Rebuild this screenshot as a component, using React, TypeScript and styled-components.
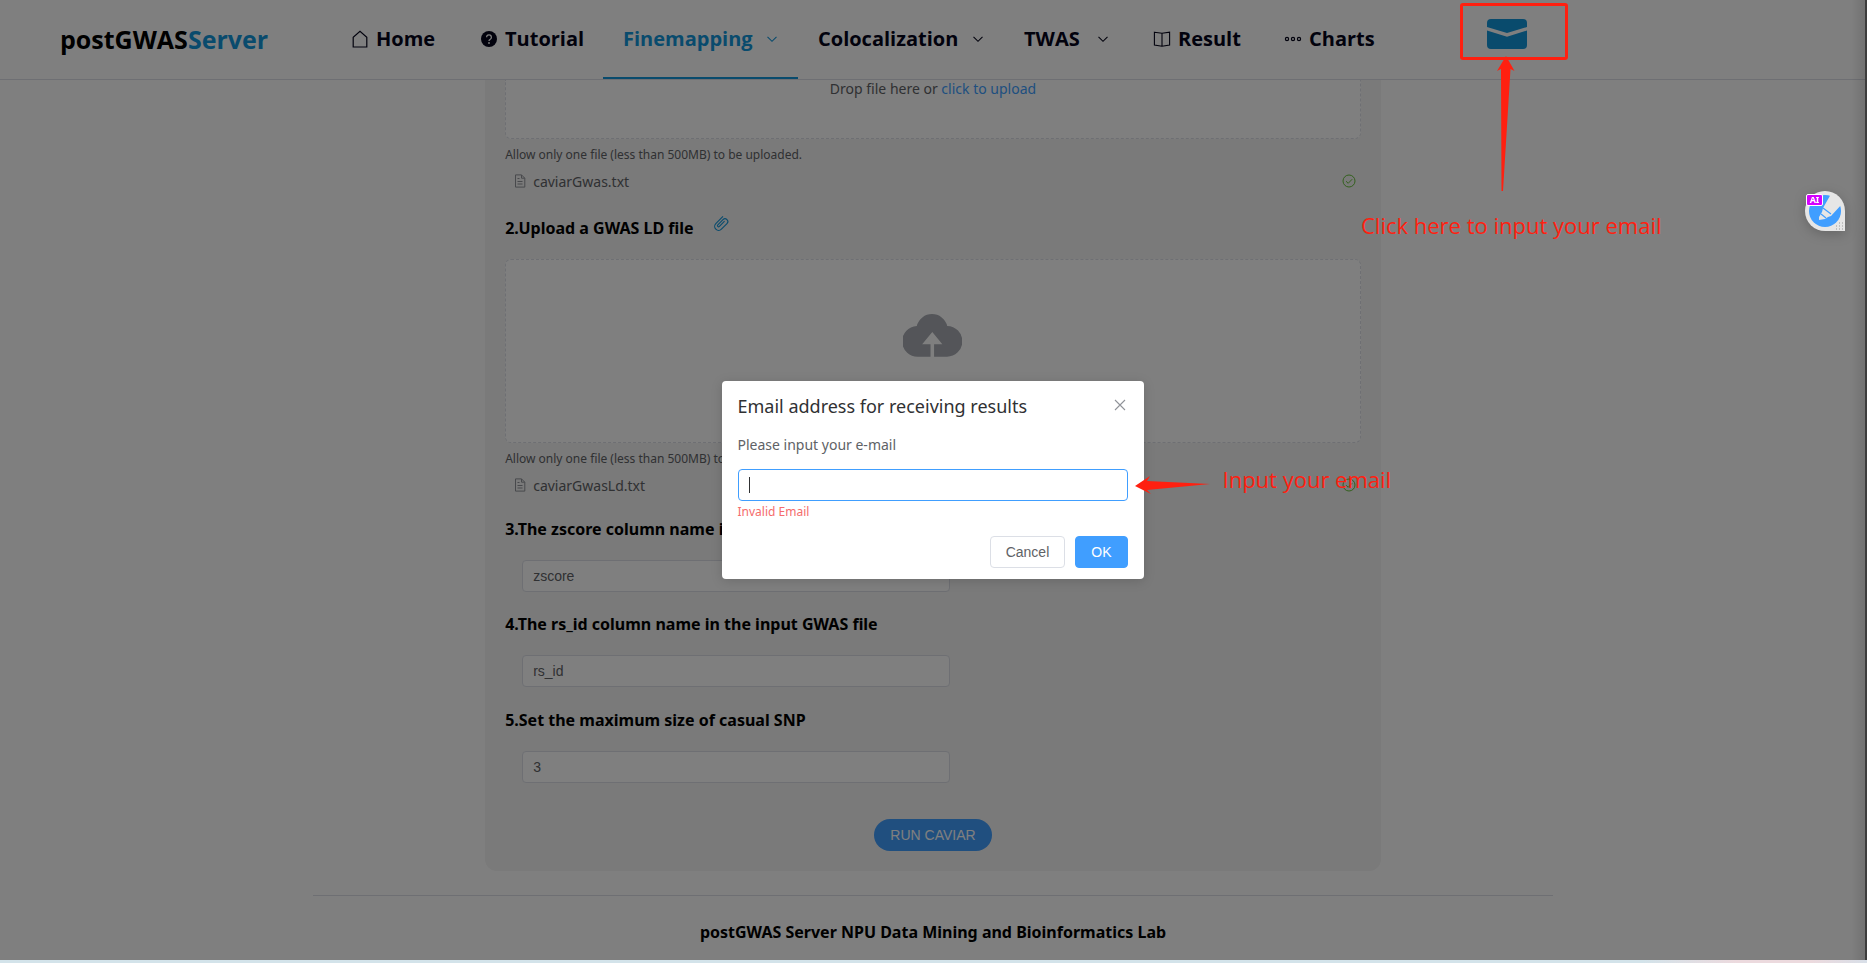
import React from "react";
import styled, { createGlobalStyle } from "styled-components";

const uiFont = `"Noto Sans", "Open Sans", sans-serif`;
const navFont = `"Open Sans", "Noto Sans", sans-serif`;
const controlFont = `"Liberation Sans", Arial, sans-serif`;
const brand = "#1296db";
const primary = "#409eff";
const red = "#ff2010";

const GlobalStyle = createGlobalStyle`
  *, *::before, *::after { box-sizing: border-box; }
  body { margin: 0; background: #fff; font-family: ${uiFont}; color: #000; }
  h1, h2, h3, p, ul { margin: 0; padding: 0; }
  button, input { font-family: ${controlFont}; font-size: 14px; }
`;

const Page = styled.div`
  position: relative;
  display: flex;
  flex-direction: column;
  min-height: 100vh;
  overflow: hidden;
`;

const Content = styled.div`
  padding-right: 1px;
`;

const Header = styled.header`
  display: flex;
  align-items: stretch;
  height: 80px;
  border-bottom: 1px solid #dcdfe6;
  font-family: ${navFont};
`;

const Logo = styled.a`
  display: flex;
  align-items: center;
  width: 327px;
  padding: 0 0 2px 60px;
  color: #000;
  font-size: 25px;
  font-weight: 700;
  text-decoration: none;
  span { color: ${brand}; }
`;

const Nav = styled.nav`
  display: flex;
`;

const NavItem = styled.a<{ $active?: boolean; $width: number }>`
  display: flex;
  align-items: center;
  width: ${(p) => p.$width}px;
  padding: 0 20px;
  border-bottom: 2px solid ${(p) => (p.$active ? brand : "transparent")};
  color: ${(p) => (p.$active ? brand : "#04041a")};
  font-size: 20px;
  font-weight: 700;
  white-space: nowrap;
  text-decoration: none;
`;

const NavIcon = styled.svg`
  flex: none;
  width: 18px;
  height: 18px;
  margin: 0 7px 0 4px;
`;

const NavArrow = styled.svg`
  flex: none;
  width: 12px;
  height: 12px;
  margin-left: auto;
`;

const MailSpot = styled.div`
  position: relative;
  width: 108px;
  height: 57px;
  margin: 3px 0 0 66px;
`;

const MailButton = styled.button`
  display: flex;
  align-items: center;
  justify-content: center;
  width: 94px;
  height: 62px;
  padding: 0;
  border: 0;
  background: none;
  svg { width: 40px; height: 30px; }
`;

const MailFrame = styled.div`
  position: absolute;
  inset: 0;
  z-index: 5;
  border: 3px solid ${red};
  border-radius: 3px;
  pointer-events: none;
`;

const MailArrow = styled.svg`
  position: absolute;
  z-index: 5;
  top: 53px;
  left: 36px;
  width: 20px;
  height: 136px;
`;

const Note = styled.p<{ $left: number; $top: number }>`
  position: absolute;
  z-index: 5;
  top: ${(p) => p.$top}px;
  left: ${(p) => p.$left}px;
  color: ${red};
  font-family: ${navFont};
  font-size: 22px;
  line-height: 32px;
  white-space: nowrap;
`;

const Card = styled.main`
  width: 48%;
  margin: 0 auto;
  padding: 0 20px 20px;
  border-radius: 0 0 12px 12px;
  background: #f4f4f4;
`;

const DropZone = styled.div<{ $cut?: boolean }>`
  display: flex;
  flex-direction: column;
  align-items: center;
  height: ${(p) => (p.$cut ? 59 : 184)}px;
  padding-top: ${(p) => (p.$cut ? 0 : 52)}px;
  border: 1px dashed #dcdfe6;
  border-top-width: ${(p) => (p.$cut ? 0 : 1)}px;
  border-radius: ${(p) => (p.$cut ? "0 0 6px 6px" : "6px")};
  background: #fff;
  color: #606266;
  font-size: 14px;
  line-height: 18px;
  a { color: ${primary}; text-decoration: none; }
`;

const CloudIcon = styled.svg`
  width: 59px;
  height: 45px;
`;

const Hint = styled.p`
  margin-top: 7px;
  color: #606266;
  font-size: 12px;
  line-height: 18px;
`;

const FileRow = styled.div`
  display: flex;
  align-items: center;
  height: 26px;
  margin-top: 4px;
  padding: 0 5px 0 8px;
  color: #606266;
  font-size: 14px;
  svg { width: 14px; height: 14px; }
  svg:first-child { margin-right: 6px; color: #909399; }
  svg:last-child { margin-left: auto; color: #67c23a; }
`;

const Heading = styled.h3`
  display: flex;
  align-items: center;
  height: 24px;
  color: #000;
  font-size: 16px;
  font-weight: 700;
  svg { width: 18px; height: 18px; margin: 0 0 8px 18px; color: ${brand}; }
`;

const Section = styled.section<{ $gap: number }>`
  margin-top: ${(p) => p.$gap}px;
`;

const Field = styled.input`
  display: block;
  width: 50%;
  height: 32px;
  margin: 19px 0 0 17px;
  padding: 0 10px;
  border: 1px solid #dcdfe6;
  border-radius: 4px;
  background: #fff;
  color: #606266;
  outline: none;
`;

const RunButton = styled.button`
  display: block;
  width: 118px;
  height: 32px;
  margin: 36px auto 0;
  padding: 0;
  border: 0;
  border-radius: 16px;
  background: ${primary};
  color: #fff;
`;

const Footer = styled.footer`
  width: calc(100% - 626px);
  margin: 24px auto 0;
  padding-top: 24px;
  border-top: 1px solid #dcdfe6;
  font-size: 16px;
  font-weight: 700;
  line-height: 24px;
  text-align: center;
`;

const Shade = styled.div`
  position: absolute;
  inset: 0 0 3px;
  z-index: 2;
  display: flex;
  align-items: center;
  justify-content: center;
  border-right: 2px solid #3d3d3d;
  background: linear-gradient(to left, rgba(0, 0, 0, 0.1), transparent 14px), rgba(0, 0, 0, 0.5);
`;

const Taskbar = styled.div`
  height: 3px;
  margin-top: auto;
  background: linear-gradient(to right, #d3e3ea 0 88%, #ecdade 93%, #ecdade 97%, #d8dfe8);
`;

const Dialog = styled.div`
  position: relative;
  width: 422px;
  padding: 15px 16px 11px;
  border-radius: 4px;
  background: #fff;
  box-shadow: 0 2px 12px rgba(0, 0, 0, 0.15);
`;

const DialogHead = styled.div`
  display: flex;
  align-items: center;
  justify-content: space-between;
  height: 20px;
`;

const DialogTitle = styled.h2`
  color: #303133;
  font-size: 18px;
  font-weight: 400;
  line-height: 20px;
`;

const CloseButton = styled.button`
  display: flex;
  padding: 0 0 2px;
  border: 0;
  background: none;
  color: #909399;
  svg { width: 16px; height: 16px; }
`;

const Message = styled.label`
  display: block;
  margin-top: 17px;
  color: #606266;
  font-size: 14px;
  line-height: 24px;
`;

const EmailBox = styled.div`
  position: relative;
  margin-top: 12px;
  &::after {
    content: "";
    position: absolute;
    top: 8px;
    left: 11px;
    width: 1px;
    height: 16px;
    background: #303133;
  }
`;

const EmailInput = styled.input`
  display: block;
  width: 100%;
  height: 32px;
  padding: 0 11px;
  border: 1px solid ${primary};
  border-radius: 4px;
  background: #fff;
  outline: none;
`;

const ErrorText = styled.p`
  margin-top: 2px;
  color: #f56c6c;
  font-size: 12px;
  line-height: 18px;
`;

const Actions = styled.div`
  display: flex;
  justify-content: flex-end;
  gap: 10px;
  margin-top: 15px;
`;

const DialogButton = styled.button<{ $primary?: boolean }>`
  height: 32px;
  padding: 0 15px;
  border: 1px solid ${(p) => (p.$primary ? primary : "#dcdfe6")};
  border-radius: 4px;
  background: ${(p) => (p.$primary ? primary : "#fff")};
  color: ${(p) => (p.$primary ? "#fff" : "#606266")};
`;

const InputArrow = styled.svg`
  position: absolute;
  top: 94px;
  left: 413px;
  width: 76px;
  height: 20px;
`;

const Assistant = styled.button`
  position: absolute;
  top: 190px;
  right: 21px;
  z-index: 4;
  width: 42px;
  height: 42px;
  padding: 0;
  border: 0;
  background: none;
  filter: drop-shadow(0 3px 6px rgba(0, 0, 0, 0.2));
  svg { display: block; }
`;

const AiTag = styled.span`
  position: absolute;
  top: 4px;
  left: 2px;
  width: 17px;
  height: 12px;
  border: 1px solid #fff;
  border-radius: 2px;
  background: #d400ff;
  color: #fff;
  font-family: ${uiFont};
  font-size: 9px;
  font-weight: 700;
  line-height: 10px;
  text-align: center;
`;

const HomeIcon = () => (
  <NavIcon viewBox="0 0 18 18" fill="none" stroke="currentColor" strokeWidth="1.2">
    <path d="M2.2 17V7.2L9 1.4l6.8 5.8V17z" />
  </NavIcon>
);

const QuestionIcon = () => (
  <NavIcon viewBox="0 0 18 18">
    <circle cx="9" cy="9" r="8" fill="currentColor" />
    <path d="M6.6 7.2a2.4 2.4 0 1 1 3.6 2.1c-.8.4-1.2.8-1.2 1.7" fill="none" stroke="#fff" strokeWidth="1.3" />
    <circle cx="9" cy="13" r=".9" fill="#fff" />
  </NavIcon>
);

const BookIcon = () => (
  <NavIcon viewBox="0 0 18 18" fill="none" stroke="currentColor" strokeWidth="1.1">
    <path d="M9 3.2v13M1.4 2.2 9 3.2l7.6-1v12.9L9 16.3l-7.6-1.2z" />
  </NavIcon>
);

const DotsIcon = () => (
  <NavIcon viewBox="0 0 18 18" fill="none" stroke="currentColor" strokeWidth="1.2">
    <circle cx="3" cy="9" r="1.6" />
    <circle cx="9" cy="9" r="1.6" />
    <circle cx="15" cy="9" r="1.6" />
  </NavIcon>
);

const Chevron = () => (
  <NavArrow viewBox="0 0 12 12" fill="none" stroke="currentColor" strokeWidth="1.1">
    <path d="M1.5 3.8 6 8.3l4.500-4.500" />
  </NavArrow>
);

const MailIcon = () => (
  <svg viewBox="0 0 40 30" fill={brand}>
    <path d="M0 8V4a4 4 0 0 1 4-4h32a4 4 0 0 1 4 4v4l-20 6z" />
    <path d="M0 11.500 20 17.700l20-6.200V26a4 4 0 0 1-4 4H4a4 4 0 0 1-4-4z" />
  </svg>
);

const ClipIcon = () => (
  <svg viewBox="0 0 1024 1024" fill="currentColor" aria-hidden="true">
    <path d="M602.496 240.448A192 192 0 1 1 874.048 512l-316.800 316.800A256 256 0 0 1 195.200 466.752L602.496 59.456l45.248 45.248L240.448 512A192 192 0 0 0 512 783.552l316.800-316.800a128 128 0 1 0-181.056-181.056L353.600 579.904a32 32 0 1 0 45.248 45.248l294.144-294.144 45.312 45.248L444.096 670.400a96 96 0 1 1-135.744-135.744l294.144-294.208z" />
  </svg>
);

const DocIcon = () => (
  <svg viewBox="0 0 14 14" fill="none" stroke="currentColor" aria-hidden="true">
    <path d="M2.500.900h6l3.300 3.300v8.900h-9.300zM8.500.900v3.300h3.300M4.500 4.500h2M4.500 7.500h5M4.500 10h5" />
  </svg>
);

const DoneIcon = () => (
  <svg viewBox="0 0 14 14" fill="none" stroke="currentColor" aria-hidden="true">
    <circle cx="7" cy="7" r="6" />
    <path d="m4 7.200 2.200 2.100 4-4.100" />
  </svg>
);

const UploadCloud = () => (
  <CloudIcon viewBox="0 0 60 45" fill="#a8abb2">
    <path d="M28 45H15.500A15.500 15.500 0 0 1 14 13.800a16 16 0 0 1 31 0A15.500 15.500 0 0 1 44.500 45H31.600V32.500H40L29.800 20 19.500 32.500H28z" />
  </CloudIcon>
);

const fields = [
  { id: "zscore", title: "3.The zscore column name in the input GWAS file", value: "zscore", gap: 19 },
  { id: "rsid", title: "4.The rs_id column name in the input GWAS file", value: "rs_id", gap: 20 },
  { id: "max", title: "5.Set the maximum size of casual SNP", value: "3", gap: 21 },
];

const UploadedFile = ({ name }: { name: string }) => (
  <>
    <Hint>Allow only one file (less than 500MB) to be uploaded.</Hint>
    <FileRow>
      <DocIcon />
      {name}
      <DoneIcon />
    </FileRow>
  </>
);

export default function App() {
  return (
    <Page>
      <GlobalStyle />
      <Header>
        <Logo href="#">postGWAS<span>Server</span></Logo>
        <Nav>
          <NavItem href="#" $width={129}><HomeIcon />Home</NavItem>
          <NavItem href="#" $width={147}><QuestionIcon />Tutorial</NavItem>
          <NavItem href="#" $width={195} $active>Finemapping<Chevron /></NavItem>
          <NavItem href="#" $width={206}>Colocalization<Chevron /></NavItem>
          <NavItem href="#" $width={125}>TWAS<Chevron /></NavItem>
          <NavItem href="#" $width={131}><BookIcon />Result</NavItem>
          <NavItem href="#" $width={134}><DotsIcon />Charts</NavItem>
        </Nav>
        <MailSpot>
          <MailButton aria-label="Email"><MailIcon /></MailButton>
          <MailFrame />
          <MailArrow viewBox="0 0 20 136" fill={red}>
            <path d="M10 0 18.500 15l-4-2L7 135h-1.500L5 13l-4 2z" />
          </MailArrow>
          <Note $left={-99} $top={206}>Click here to input your email</Note>
        </MailSpot>
      </Header>

      <Content>
        <Card>
          <DropZone $cut>
            <p>Drop file here or <a href="#">click to upload</a></p>
          </DropZone>
          <UploadedFile name="caviarGwas.txt" />
          <Section $gap={22}>
            <Heading>2.Upload a GWAS LD file<ClipIcon /></Heading>
          </Section>
          <Section $gap={19}>
            <DropZone><UploadCloud /></DropZone>
            <UploadedFile name="caviarGwasLd.txt" />
          </Section>
          {fields.map((f) => (
            <Section key={f.id} $gap={f.gap}>
              <Heading as="label" htmlFor={f.id}>{f.title}</Heading>
              <Field id={f.id} defaultValue={f.value} />
            </Section>
          ))}
          <RunButton>RUN CAVIAR</RunButton>
        </Card>
        <Footer>postGWAS Server NPU Data Mining and Bioinformatics Lab</Footer>
      </Content>
      <Taskbar />

      <Assistant aria-label="AI assistant">
        <svg width="42" height="42" viewBox="0 0 42 42">
          <path d="M21 1a20 20 0 0 1 20 20v20H21a20 20 0 0 1 0-40z" fill="#e6e6e6" />
          <circle cx="21" cy="21" r="16" fill={primary} />
          <path d="m27 4-8 14-1 4-3 5v3l6-1 3-2 3-1 11-12-3-7z" fill="#e6e6e6" />
          <path d="m19 18 8 6M17 24l5 4" stroke={primary} strokeWidth="1.200" />
          <path d="M35 33h1m2 0h1m-4 3h1m2 0h1m-7 0h1m-1 3h1m2 0h1m2 0h1" stroke="#999" />
        </svg>
        <AiTag>AI</AiTag>
      </Assistant>

      <Shade>
        <Dialog role="dialog" aria-labelledby="dialog-title">
          <DialogHead>
            <DialogTitle id="dialog-title">Email address for receiving results</DialogTitle>
            <CloseButton aria-label="Close">
              <svg viewBox="0 0 16 16" fill="none" stroke="currentColor" strokeWidth="1.100">
                <path d="m3 3 10 10M13 3 3 13" />
              </svg>
            </CloseButton>
          </DialogHead>
          <Message htmlFor="email">Please input your e-mail</Message>
          <EmailBox><EmailInput id="email" type="email" /></EmailBox>
          <ErrorText>Invalid Email</ErrorText>
          <Actions>
            <DialogButton>Cancel</DialogButton>
            <DialogButton $primary>OK</DialogButton>
          </Actions>
          <InputArrow viewBox="0 0 76 20" fill={red}>
            <path d="M0 11 15 1l-3 5 63 3-63 6 4 4z" />
          </InputArrow>
          <Note $left={501} $top={82}>Input your email</Note>
        </Dialog>
      </Shade>
    </Page>
  );
}
